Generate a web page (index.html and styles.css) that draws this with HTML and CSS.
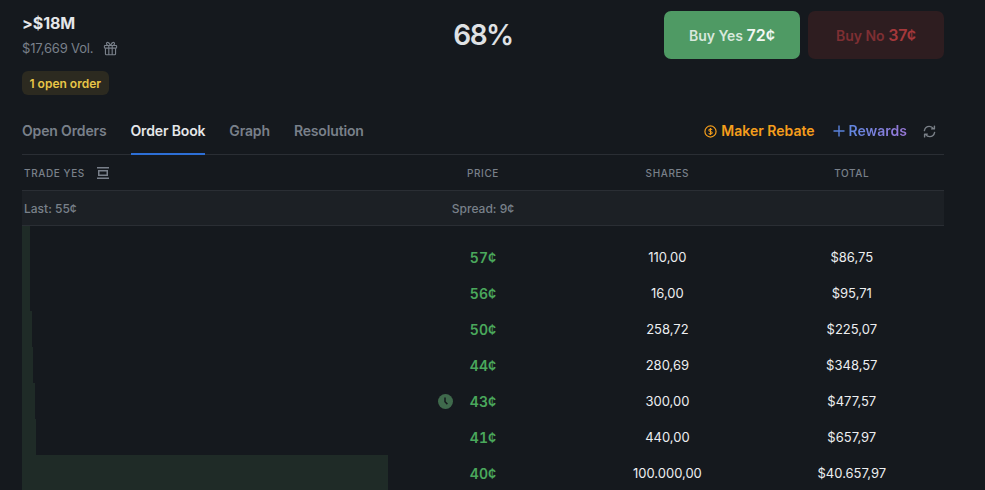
FILE: index.html
```html
<!doctype html>
<html lang="en">
  <head>
    <meta charset="UTF-8" />
    <meta name="viewport" content="width=device-width, initial-scale=1.0" />
    <title>Order Book</title>
    <link rel="stylesheet" href="styles.css">
  </head>
  <body>
    <div class="market">
      <div class="market-header">
        <div class="market-info">
          <h1>&gt;$18M</h1>
          <div class="volume">
            $17,669 Vol.
            <svg class="gift-icon" viewBox="0 0 16 16" fill="none" stroke="currentColor" stroke-width="1.2">
              <rect x="1.500" y="4.800" width="13" height="2.800" rx="0.600"></rect>
              <path d="M2.600 7.600v6a1 1 0 0 0 1 1h8.800a1 1 0 0 0 1-1v-6M6.200 4.800v9.800M9.800 4.800v9.800"></path>
              <path d="M8 4.800C6.800 2.200 5.400 1.200 4.400 1.600c-1.200.5-.9 2.600 1 3.200M8 4.800c1.200-2.600 2.600-3.600 3.600-3.200 1.200.5.9 2.600-1 3.200"></path>
            </svg>
          </div>
          <span class="order-badge">1 open order</span>
        </div>
        <div class="chance">68%</div>
        <div class="buy-buttons">
          <button class="buy-button buy-yes">Buy Yes <b>72¢</b></button>
          <button class="buy-button buy-no">Buy No <b>37¢</b></button>
        </div>
      </div>

      <div class="tabs">
        <a class="tab">Open Orders</a>
        <a class="tab active">Order Book</a>
        <a class="tab">Graph</a>
        <a class="tab">Resolution</a>
        <div class="tab-actions">
          <span class="maker-rebate">
            <svg class="rebate-icon" viewBox="0 0 14 14" fill="none" stroke="currentColor">
              <circle cx="7" cy="7" r="6" stroke-width="1.300"></circle>
              <path stroke-width="1.100" d="M8.800 5.200C8.400 4.500 7.700 4.200 7 4.200c-1 0-1.800.5-1.800 1.400 0 1.900 3.700.9 3.700 2.800 0 .9-.9 1.400-1.900 1.400-.8 0-1.500-.3-1.900-1M7 3.200v7.600"></path>
            </svg>
            Maker Rebate
          </span>
          <span class="rewards">
            <svg class="plus-icon" viewBox="0 0 12 12" fill="none" stroke="currentColor" stroke-width="1.400">
              <path d="M6 .5v11M.5 6h11"></path>
            </svg>
            <span class="rewards-text">Rewards</span>
          </span>
          <svg class="refresh-icon" viewBox="0 0 14 14" fill="none" stroke="currentColor" stroke-width="1.500" stroke-linecap="round" stroke-linejoin="round">
            <path d="M1.500 6C2 3.400 4.200 1.500 6.800 1.500c1.900 0 3.300.9 4.400 2.500M12.300 1.200v3H9.300"></path>
            <path d="M12.500 8c-.5 2.600-2.700 4.500-5.300 4.500-1.900 0-3.300-.9-4.400-2.500M1.700 12.800v-3h3"></path>
          </svg>
        </div>
      </div>

      <div class="book-row book-head">
        <div class="trade-label">
          Trade Yes
          <svg class="center-icon" viewBox="0 0 12 12" fill="none" stroke="currentColor">
            <path stroke-width="1.500" d="M0 .75h12M0 11.250h12"></path>
            <rect x="1.750" y="3.750" width="8.500" height="4.500" stroke-width="1.500"></rect>
          </svg>
        </div>
        <div class="cell">Price</div>
        <div class="cell">Shares</div>
        <div class="cell">Total</div>
      </div>

      <div class="book-row book-spread">
        <div class="last">Last: 55¢</div>
        <div class="cell">Spread: 9¢</div>
      </div>

      <div class="book-rows">
        <div class="book-list">
          <div class="book-row order">
            <div class="depth"><div class="depth-bar" style="width: 8px"></div></div>
            <div class="cell price">57¢</div>
            <div class="cell">110,00</div>
            <div class="cell">$86,75</div>
          </div>
          <div class="book-row order">
            <div class="depth"><div class="depth-bar" style="width: 8px"></div></div>
            <div class="cell price">56¢</div>
            <div class="cell">16,00</div>
            <div class="cell">$95,71</div>
          </div>
          <div class="book-row order">
            <div class="depth"><div class="depth-bar" style="width: 9.5px"></div></div>
            <div class="cell price">50¢</div>
            <div class="cell">258,72</div>
            <div class="cell">$225,07</div>
          </div>
          <div class="book-row order">
            <div class="depth"><div class="depth-bar" style="width: 11px"></div></div>
            <div class="cell price">44¢</div>
            <div class="cell">280,69</div>
            <div class="cell">$348,57</div>
          </div>
          <div class="book-row order">
            <div class="depth"><div class="depth-bar" style="width: 12.5px"></div></div>
            <div class="cell price">
              <svg class="clock-icon" viewBox="0 0 15 15">
                <circle cx="7.500" cy="7.500" r="7.500" fill="#3f6a4c"></circle>
                <path d="M7 3.500v4.300l2.400 2.300" fill="none" stroke="#15191e" stroke-width="1.500"></path>
              </svg>
              43¢
            </div>
            <div class="cell">300,00</div>
            <div class="cell">$477,57</div>
          </div>
          <div class="book-row order">
            <div class="depth"><div class="depth-bar" style="width: 14px"></div></div>
            <div class="cell price">41¢</div>
            <div class="cell">440,00</div>
            <div class="cell">$657,97</div>
          </div>
          <div class="book-row order">
            <div class="depth"><div class="depth-bar" style="width: 366px"></div></div>
            <div class="cell price">40¢</div>
            <div class="cell">100.000,00</div>
            <div class="cell">$40.657,97</div>
          </div>
        </div>
      </div>
    </div>
  </body>
</html>
```

FILE: styles.css
```css
* {
  margin: 0;
  padding: 0;
  box-sizing: border-box;
}

html,
body {
  height: 100%;
  overflow: hidden;
}

body {
  font-family: Inter, "Liberation Sans", sans-serif;
  background: #15191e;
  color: #e8eaed;
}

.market {
  width: 922px;
  height: 490px;
  margin-left: 22px;
  display: flex;
  flex-direction: column;
}

.market-header {
  height: 121px;
  padding-top: 11px;
  display: grid;
  grid-template-columns: 1fr auto 1fr;
  align-items: start;
}

.market-info {
  display: flex;
  flex-direction: column;
  align-items: flex-start;
}

h1 {
  font-size: 16px;
  font-weight: 700;
  letter-spacing: -0.1px;
  line-height: 24px;
  color: #e4e6e9;
}

.volume {
  margin-top: 3px;
  display: flex;
  align-items: center;
  gap: 10px;
  font-size: 13px;
  letter-spacing: -0.2px;
  line-height: 20px;
  color: #79808a;
}

.gift-icon {
  width: 15px;
  height: 15px;
}

.order-badge {
  margin-top: 13px;
  height: 24px;
  padding: 0 7.500px;
  display: flex;
  align-items: center;
  border-radius: 6px;
  background: #2c2a20;
  color: #e8c547;
  font-size: 12px;
  font-weight: 600;
}

.chance {
  margin-top: 3px;
  font-size: 28px;
  line-height: 42px;
  font-weight: 600;
  letter-spacing: -1.500px;
  color: #dfe1e4;
}

.buy-buttons {
  display: flex;
  justify-content: flex-end;
  gap: 8px;
}

.buy-button {
  width: 136px;
  height: 48px;
  border: none;
  border-radius: 7px;
  font-family: inherit;
  font-size: 14px;
  font-weight: 600;
}

.buy-button b {
  font-size: 16px;
  font-weight: 600;
}

.buy-yes {
  background: #4f9a64;
  color: #d8e8dc;
}

.buy-yes b {
  color: #f2f7f3;
}

.buy-no {
  background: #2e1d20;
  color: #7e2f33;
}

.buy-no b {
  color: #a5383b;
}

.tabs {
  height: 34px;
  display: flex;
  align-items: flex-start;
  gap: 24px;
  border-bottom: 1px solid #2a2e34;
  font-size: 14px;
  font-weight: 600;
  letter-spacing: -0.150px;
  line-height: 20px;
  color: #79808a;
}

.tab {
  height: 34px;
}

.tab.active {
  color: #e4e6e9;
  border-bottom: 2px solid #2d6fd6;
}

.tab-actions {
  margin-left: auto;
  display: flex;
  align-items: center;
  height: 20px;
  padding-right: 8px;
  letter-spacing: 0;
}

.maker-rebate {
  display: flex;
  align-items: center;
  gap: 4px;
  color: #f59e1c;
}

.rebate-icon {
  width: 13px;
  height: 13px;
}

.rewards {
  margin-left: 18px;
  display: flex;
  align-items: center;
  gap: 4px;
  color: #5a82dc;
}

.plus-icon {
  width: 12px;
  height: 12px;
}

.rewards-text {
  background: linear-gradient(90deg, #5f86de, #9a78d8);
  -webkit-background-clip: text;
  background-clip: text;
  color: transparent;
}

.refresh-icon {
  margin-left: 16px;
  width: 13px;
  height: 13px;
  color: #7a8088;
}

.book-row {
  display: grid;
  grid-template-columns: 2fr 1fr 1fr 1fr;
  align-items: center;
}

.cell {
  text-align: center;
}

.book-head {
  height: 36px;
  flex-shrink: 0;
  border-bottom: 1px solid #2a2e34;
  font-size: 10px;
  font-weight: 500;
  letter-spacing: 0.6px;
  text-transform: uppercase;
  color: #79808a;
}

.trade-label {
  padding-left: 2px;
  display: flex;
  align-items: center;
  gap: 12px;
}

.center-icon {
  width: 12px;
  height: 12px;
}

.book-spread {
  height: 35px;
  flex-shrink: 0;
  background: #1c2025;
  border-bottom: 1px solid #2a2e34;
  font-size: 12px;
  font-weight: 500;
  color: #79808a;
}

.last {
  padding-left: 2px;
}

.book-rows {
  flex: 1;
  overflow: hidden;
  padding-top: 13px;
  background: linear-gradient(90deg, #1f2b27 8px, transparent 8px) no-repeat 0 0 / 100% 13px;
}

.order {
  height: 36px;
  font-size: 13px;
  font-weight: 400;
  color: #eceef0;
}

.depth {
  height: 36px;
}

.depth-bar {
  height: 100%;
  background: #1f2b27;
}

.price {
  position: relative;
  font-size: 14px;
  font-weight: 600;
  font-variant-numeric: tabular-nums;
  color: #4aa85c;
}

.clock-icon {
  position: absolute;
  left: 47px;
  top: 1px;
  width: 15px;
  height: 15px;
}
```
